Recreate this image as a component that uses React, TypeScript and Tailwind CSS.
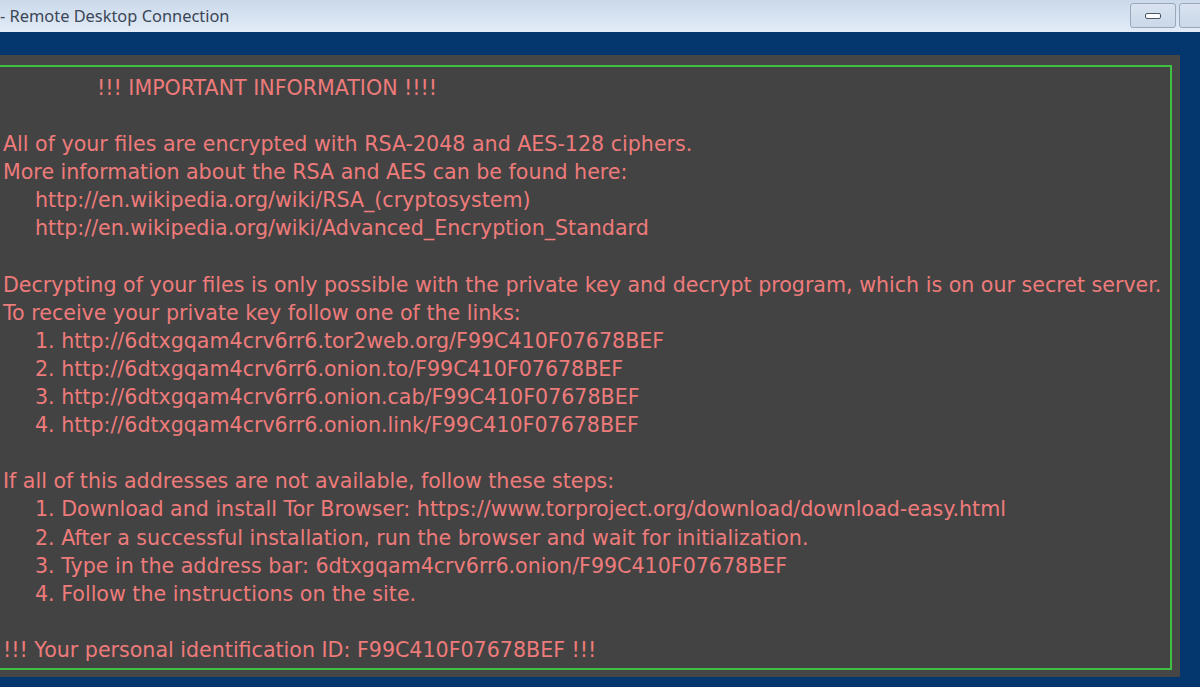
import React from "react";

const lines: { text: string; indent?: boolean; title?: boolean }[] = [
  { text: "!!! IMPORTANT INFORMATION !!!!", title: true },
  { text: "" },
  { text: "All of your files are encrypted with RSA-2048 and AES-128 ciphers." },
  { text: "More information about the RSA and AES can be found here:" },
  { text: "http://en.wikipedia.org/wiki/RSA_(cryptosystem)", indent: true },
  { text: "http://en.wikipedia.org/wiki/Advanced_Encryption_Standard", indent: true },
  { text: "" },
  {
    text: "Decrypting of your files is only possible with the private key and decrypt program, which is on our secret server.",
  },
  { text: "To receive your private key follow one of the links:" },
  { text: "1. http://6dtxgqam4crv6rr6.tor2web.org/F99C410F07678BEF", indent: true },
  { text: "2. http://6dtxgqam4crv6rr6.onion.to/F99C410F07678BEF", indent: true },
  { text: "3. http://6dtxgqam4crv6rr6.onion.cab/F99C410F07678BEF", indent: true },
  { text: "4. http://6dtxgqam4crv6rr6.onion.link/F99C410F07678BEF", indent: true },
  { text: "" },
  { text: "If all of this addresses are not available, follow these steps:" },
  {
    text: "1. Download and install Tor Browser: https://www.torproject.org/download/download-easy.html",
    indent: true,
  },
  { text: "2. After a successful installation, run the browser and wait for initialization.", indent: true },
  { text: "3. Type in the address bar: 6dtxgqam4crv6rr6.onion/F99C410F07678BEF", indent: true },
  { text: "4. Follow the instructions on the site.", indent: true },
  { text: "" },
  { text: "!!! Your personal identification ID: F99C410F07678BEF !!!" },
];

export default function App() {
  return (
    <div className="w-[1200px] h-[687px] overflow-hidden flex flex-col bg-[#05376f]">
      {/* Title bar */}
      <div className="h-[32px] shrink-0 flex items-start justify-between bg-gradient-to-b from-[#cbd9ea] to-[#e2ecf7]">
        <span
          className="mt-[4px] text-[16.4px] leading-[24px] text-[#3b4656]"
          style={{ fontFamily: '"Noto Sans", "Open Sans", sans-serif' }}
        >
          - Remote Desktop Connection
        </span>
        <div className="flex gap-[3px] mt-[3px] -mr-[25px]">
          <div className="w-[46px] h-[25px] rounded-[3px] border border-[#9aa8bb] bg-gradient-to-b from-[#d9e3f0] to-[#cbd8e8] flex items-center justify-center">
            <div className="w-[16px] h-[6px] rounded-[2px] border border-[#4d5866] bg-white" />
          </div>
          <div className="w-[46px] h-[25px] rounded-[3px] border border-[#9aa8bb] bg-gradient-to-b from-[#d9e3f0] to-[#cbd8e8]" />
        </div>
      </div>

      {/* Remote desktop area */}
      <div className="flex-1 pt-[23px] pb-[10px]">
        <div className="-ml-[20px] w-[1200px] h-[622px] bg-[#464646] pt-[10px] pr-[8px] pb-[7px]">
          <div className="h-full border-2 border-[#3fbf45] bg-[#434343] pl-[21px] pt-[7px]">
            <div
              className="text-[#ee7b7b] text-[20.6px] leading-[28.1px] whitespace-pre"
              style={{ fontFamily: '"DejaVu Sans", Verdana, sans-serif' }}
            >
              {lines.map((l, i) => (
                <div
                  key={i}
                  className={l.title ? "pl-[94px]" : l.indent ? "pl-[32px]" : ""}
                >
                  {l.text || "\u00a0"}
                </div>
              ))}
            </div>
          </div>
        </div>
      </div>
    </div>
  );
}
